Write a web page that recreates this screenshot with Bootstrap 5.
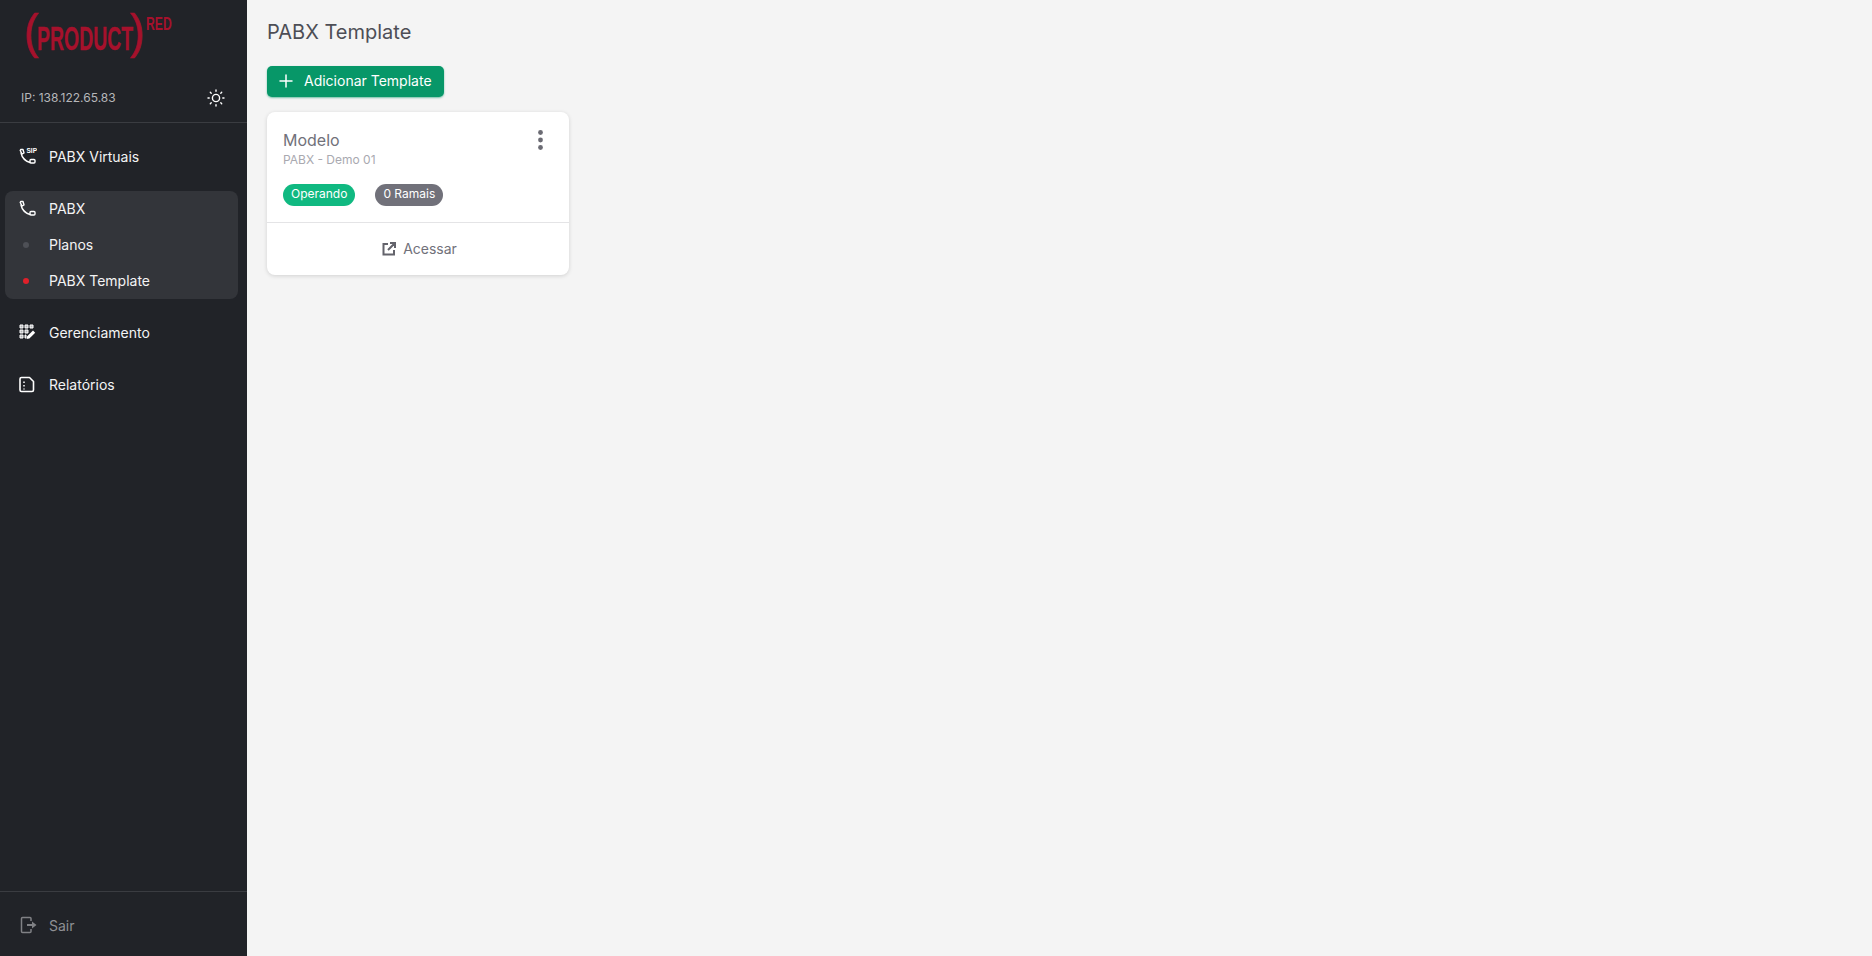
<!DOCTYPE html>
<html lang="en">
<head>
  <meta charset="UTF-8" />
  <meta name="viewport" content="width=device-width, initial-scale=1.0"/>
  <title>PABX Template</title>
  <link href="https://cdn.jsdelivr.net/npm/bootstrap@5.3.0/dist/css/bootstrap.min.css" rel="stylesheet"/>
  <style>
    html, body { height: 100%; }
    body { font-family: Inter, "Liberation Sans", sans-serif; background: #f4f4f4; font-size: 14px; }
    .shell { height: 956px; overflow: hidden; }
    .side { width: 247px; flex: 0 0 247px; background: #212328; }
    .logo-box { height: 73px; padding-left: 24px; color: #a6112c; font-family: "Liberation Sans", sans-serif; font-weight: 700; line-height: 1; white-space: nowrap; }
    .logo-box span { display: block; transform-origin: left top; }
    .logo-paren { font-size: 48px; font-weight: 400; margin-top: 8px; transform: scaleX(.9); -webkit-text-stroke: .7px #a6112c; }
    .logo-paren.first { width: 13px; }
    .logo-paren.last { width: 16px; }
    .logo-word { font-size: 33px; margin-top: 22px; width: 93px; transform: scaleX(.59); -webkit-text-stroke: .3px #a6112c; }
    .logo-sup { font-size: 19px; margin-top: 14px; transform: scaleX(.64); }
    .ip-row { height: 50px; padding: 0 22px 0 21px; border-bottom: 1px solid #3a3c41; color: #b6b7ba; font-size: 12px; }
    .side-link { height: 36px; padding-left: 17px; color: #f3f3f4; text-decoration: none; font-size: 14px; }
    .side-link:hover { color: #fff; }
    .first-link { margin-top: 15px; }
    .ico { width: 20px; height: 20px; flex: 0 0 20px; margin-right: 12px; }
    .dot-slot { width: 18px; flex: 0 0 18px; margin-right: 14px; }
    .dot-mark { width: 6px; height: 6px; border-radius: 50%; background: #4e5056; margin-top: 1px; }
    .dot-mark.on { background: #e0202a; }
    .side-group { margin: 17px 9px 15px 5px; height: 108px; background: #33353a; border-radius: 8px; }
    .side-group .side-link { padding-left: 12px; position: relative; top: -1px; }
    .side-foot { border-top: 1px solid #3a3c41; height: 65px; }
    .side-foot .side-link { color: #8f9094; height: 66px; }
    .main-area { padding: 0 20px; }
    .page-title { font-size: 20px; font-weight: 400; color: #4d4e56; margin: 0; padding-top: 20px; line-height: 24px; }
    .add-btn { width: 177px; height: 31px; margin-top: 22px; padding: 0 0 2px 12px; gap: 11px; background: #079768; border: 0; border-radius: 5px; color: #fff; font-size: 14px; box-shadow: 0 1px 2px rgba(7,151,104,.55); }
    .add-btn:hover { background: #079768; color: #fff; }
    .tpl-card { width: 302px; height: 163px; margin-top: 15px; border: 0; border-radius: 8px; box-shadow: 0 1px 4px rgba(0,0,0,.14); }
    .tpl-top { height: 111px; padding: 18px 16px 0; border-bottom: 1px solid #e4e4e6; }
    .tpl-name { font-size: 16px; line-height: 20px; color: #71717a; }
    .tpl-sub { font-size: 12px; line-height: 16px; margin-top: 2px; color: #a9a9b0; }
    .pill { font-size: 12px; line-height: 20px; height: 22px; padding: 0 8px; border-radius: 11px; color: #fff; }
    .pill-green { background: #10b981; }
    .pill-gray { background: #71717a; }
    .pills { margin-top: 16px; gap: 20px; }
    .kebab { width: 5px; height: 20px; margin: 0 10px 0 0; }
    .tpl-foot { height: 52px; padding: 0 0 1px 2px; color: #71717a; font-size: 14px; gap: 6px; }
  </style>
</head>
<body>
  <div class="shell d-flex">
    <aside class="side d-flex flex-column">
      <div class="logo-box d-flex align-items-start">
        <span class="logo-paren first">(</span><span class="logo-word">PRODUCT</span><span class="logo-paren last">)</span><span class="logo-sup">RED</span>
      </div>
      <div class="ip-row d-flex align-items-center justify-content-between">
        <span>IP: 138.122.65.83</span>
        <svg width="18" height="18" viewBox="0 0 18 18" fill="none" stroke="#fff" stroke-width="1.4" stroke-linecap="round">
          <circle cx="9" cy="9" r="3.6"/>
          <path d="M9 1v1.2M9 15.8V17M1 9h1.2M15.8 9H17M3.3 3.3l.9.9M13.8 13.8l.9.9M3.3 14.7l.9-.9M13.8 4.2l.9-.9"/>
        </svg>
      </div>
      <a class="side-link first-link d-flex align-items-center" href="#">
        <svg class="ico" viewBox="0 0 20 20" fill="none" stroke="#fff" stroke-width="1.4" stroke-linecap="round" stroke-linejoin="round">
          <path d="M3.700 3.500h2.300l1 3.500-1.800 1-2-3.500z"/>
          <path d="M4 7c1 4.500 4 8 9 9.500"/>
          <rect x="13" y="13.500" width="5" height="3.500" rx="1"/>
          <text x="9.500" y="7" font-size="6.500" font-weight="700" fill="#fff" stroke="none" font-family="Liberation Sans, sans-serif">SIP</text>
        </svg>
        PABX Virtuais
      </a>
      <div class="side-group d-flex flex-column">
        <a class="side-link d-flex align-items-center" href="#">
          <svg class="ico" viewBox="0 0 20 20" fill="none" stroke="#fff" stroke-width="1.4" stroke-linecap="round" stroke-linejoin="round">
            <path d="M3.700 3.500h2.300l1 3.500-1.800 1-2-3.500z"/>
            <path d="M4 7c1 4.500 4 8 9 9.500"/>
            <rect x="13" y="13.500" width="5" height="3.500" rx="1"/>
          </svg>
          PABX
        </a>
        <a class="side-link d-flex align-items-center" href="#">
          <span class="dot-slot d-flex justify-content-center"><span class="dot-mark"></span></span>
          Planos
        </a>
        <a class="side-link d-flex align-items-center" href="#">
          <span class="dot-slot d-flex justify-content-center"><span class="dot-mark on"></span></span>
          PABX Template
        </a>
      </div>
      <a class="side-link d-flex align-items-center" href="#">
        <svg class="ico" viewBox="0 0 20 20" fill="#b4b5b8" stroke="#fff" stroke-width="1">
          <path d="M3 3h3v3H3zM8 3h3v3H8zM13 3h3v3h-3zM3 8h3v3H3zM8 8h3v3H8zM3 13h3v3H3zM8 13h1v3H8z"/>
          <path d="M9.500 17l.7-2.700 5.800-5.800 2.200 2.200-5.800 5.800z" fill="#fff" stroke="none"/>
        </svg>
        Gerenciamento
      </a>
      <a class="side-link d-flex align-items-center mt-3 mb-auto" href="#">
        <svg class="ico" viewBox="0 0 20 20" fill="none" stroke="#fff" stroke-width="1.600" stroke-linejoin="round">
          <path d="M4.500 3.500h8l4 4v8.500c0 .9-.7 1.500-1.500 1.500H4.500c-.9 0-1.500-.6-1.500-1.500V5c0-.9.6-1.500 1.500-1.500z"/>
          <path d="M7 7.500v1.500M7 11v1.500M7 14.500v1" stroke-width="1.500"/>
        </svg>
        Relatórios
      </a>
      <div class="side-foot">
        <a class="side-link d-flex align-items-center" href="#">
          <svg class="ico" viewBox="0 0 20 20" fill="none" stroke="#808185" stroke-width="1.500" stroke-linejoin="round">
            <path d="M14 6V3.500a1 1 0 0 0-1-1H5.500a1 1 0 0 0-1 1v13a1 1 0 0 0 1 1H13a1 1 0 0 0 1-1V14"/>
            <path d="M10 9h5V6.500l4.500 3.500-4.500 3.500V11h-5z" fill="#808185" stroke="none"/>
          </svg>
          Sair
        </a>
      </div>
    </aside>
    <main class="main-area flex-grow-1">
      <h1 class="page-title">PABX Template</h1>
      <button class="btn add-btn d-flex align-items-center" type="button">
        <svg width="14" height="14" viewBox="0 0 14 14" stroke="#fff" stroke-width="1.500" stroke-linecap="round"><path d="M7 1v12M1 7h12"/></svg>
        Adicionar Template
      </button>
      <div class="card tpl-card">
        <div class="tpl-top">
          <div class="d-flex justify-content-between">
            <div>
              <div class="tpl-name">Modelo</div>
              <div class="tpl-sub">PABX - Demo 01</div>
            </div>
            <svg class="kebab" viewBox="0 0 5 20" fill="#6b6b73"><circle cx="2.500" cy="2.500" r="2.400"/><circle cx="2.500" cy="10" r="2.400"/><circle cx="2.500" cy="17.500" r="2.400"/></svg>
          </div>
          <div class="pills d-flex">
            <span class="pill pill-green">Operando</span>
            <span class="pill pill-gray">0 Ramais</span>
          </div>
        </div>
        <div class="tpl-foot d-flex align-items-center justify-content-center">
          <svg width="16" height="16" viewBox="0 0 16 16" fill="none" stroke="#63636b" stroke-width="2">
            <path d="M7 3H2.500v10.500H13V9M9 2h5v5M14 2L7 9"/>
          </svg>
          Acessar
        </div>
      </div>
    </main>
  </div>
  <script src="https://cdn.jsdelivr.net/npm/bootstrap@5.3.0/dist/js/bootstrap.bundle.min.js"></script>
</body>
</html>
